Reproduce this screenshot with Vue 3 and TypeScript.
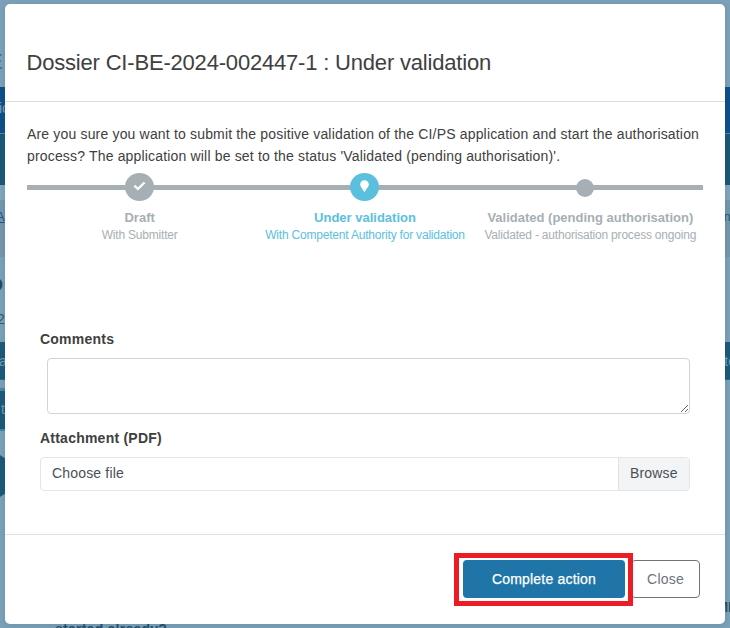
<script setup lang="ts">
import { ref } from 'vue'

interface Step {
  title: string
  detail: string
  state: 'done' | 'current' | 'pending'
}

const steps: Step[] = [
  { title: 'Draft', detail: 'With Submitter', state: 'done' },
  { title: 'Under validation', detail: 'With Competent Authority for validation', state: 'current' },
  { title: 'Validated (pending authorisation)', detail: 'Validated - authorisation process ongoing', state: 'pending' },
]
const comments = ref('')
</script>

<template>
  <div class="screen">
    <div class="page" aria-hidden="true">
      <div class="band top"><span class="brand">E</span></div>
      <div class="band nav"><span class="nav-text">ic</span></div>
      <div class="band sub"></div>
      <div class="band gap"></div>
      <div class="band crumb"><span class="link">A</span><span class="crumb-end">ne</span></div>
      <div class="band heading"><span class="big">D</span><span class="year">2</span></div>
      <div class="band bar"><span>a</span><span class="bar-end">te</span></div>
      <div class="tab"><span>t</span></div>
      <div class="hexagon"></div>
      <div class="band foot"><b class="question">started already?</b><b class="foot-end">MI</b></div>
    </div>

    <section class="modal" role="dialog">
      <header class="modal-header">
        <h1>Dossier CI-BE-2024-002447-1 : Under validation</h1>
      </header>
      <div class="modal-body">
        <p class="message">
          Are you sure you want to submit the positive validation of the CI/PS application and start the authorisation<br />
          process? The application will be set to the status 'Validated (pending authorisation)'.
        </p>
        <ol class="steps">
          <li v-for="s in steps" :key="s.title" class="step" :class="s.state">
            <div class="marker-row">
              <span class="marker">
                <svg v-if="s.state === 'done'" width="13" height="10" viewBox="0 0 13 10">
                  <path d="M1.4 4.7 L4.9 8 L11.6 1.5" fill="none" stroke="#fff" stroke-width="2.3" />
                </svg>
                <svg v-else-if="s.state === 'current'" width="9" height="13" viewBox="0 0 9 13">
                  <path d="M4.5 0.3 C2 .3 .2 2.1 .2 4.4 C.2 6.8 3 8.8 4.5 12.6 C6 8.8 8.8 6.8 8.8 4.4 C8.8 2.1 7 .3 4.5 .3Z" fill="#fff" />
                </svg>
              </span>
            </div>
            <strong>{{ s.title }}</strong>
            <small>{{ s.detail }}</small>
          </li>
        </ol>
        <form class="fields" @submit.prevent>
          <label for="comments">Comments</label>
          <textarea id="comments" v-model="comments"></textarea>
          <label for="file">Attachment (PDF)</label>
          <div id="file" class="file">
            <span class="file-name">Choose file</span>
            <span class="browse">Browse</span>
          </div>
        </form>
      </div>
      <footer class="modal-footer">
        <div class="highlight"><button class="primary" type="button">Complete action</button></div>
        <button class="close" type="button">Close</button>
      </footer>
    </section>
  </div>
</template>

<style>
body { margin: 0; overflow: hidden; }
</style>

<style scoped>
* { box-sizing: border-box; }
.screen {
  position: relative;
  width: 730px;
  height: 628px;
  overflow: hidden;
  font-family: "Liberation Sans", Arial, sans-serif;
  font-size: 14px;
  color: #404040;
}
.page {
  display: flex;
  flex-direction: column;
  height: 628px;
  background: #7ba1b9;
}
.band { display: flex; justify-content: space-between; flex: none; overflow: hidden; white-space: nowrap; }
.top { height: 87px; background: #7ca1b9; }
.brand { margin: 50px 0 0 -12px; font-size: 22px; line-height: 24px; color: #2479aa; }
.nav { height: 47px; background: #0d4f8b; border-bottom: 1px solid #568aa6; color: #7da3bd; }
.nav-text { margin: 13px 0 0 -1px; line-height: 17px; }
.sub { height: 51px; background: #1b5875; }
.gap { height: 15px; background: #80a6be; }
.crumb { height: 57px; background: #7397ae; font-size: 13px; }
.link { margin: 9px 0 0 -4px; line-height: 16px; color: #1d538b; text-decoration: underline; }
.crumb-end { margin: 9px -8px 0 0; line-height: 16px; color: #285579; }
.heading { height: 85px; flex-direction: column; justify-content: flex-start; }
.big { margin: 17px 0 0 -10px; height: 24px; font-size: 18px; line-height: 22px; font-weight: bold; color: #24485f; }
.year { margin: 13px 0 0 -3px; line-height: 17px; color: #31586e; }
.bar { height: 38px; background: #1c5a79; color: #729bb3; line-height: 38px; border-bottom: 1px solid #246a90; }
.bar span { margin-left: -1px; }
.bar .bar-end { margin-right: -6px; }
.tab { width: 8px; height: 43px; margin-top: 8px; border: solid #4d83a4; border-width: 3px 0 2px; background: #1c5a79; color: #729bb3; line-height: 37px; padding-left: 1px; }
.hexagon { flex: none; width: 32px; height: 42px; margin: 24px 0 0 -16px; background: #1c5a79; clip-path: polygon(50% 0, 100% 25%, 100% 75%, 50% 100%, 0 75%, 0 25%); }
.foot { height: 131px; color: #264f6b; }
.question { margin: 124px 0 0 55px; line-height: 16px; letter-spacing: .25px; }
.foot-end { margin: 102px -2px 0 0; line-height: 16px; }

.modal {
  position: absolute;
  left: 5px;
  top: 4px;
  display: flex;
  flex-direction: column;
  width: 720px;
  height: 620px;
  border-radius: 5px;
  background: #fff;
  box-shadow: 0 1px 6px rgba(35, 75, 100, .18);
}
.modal-header { flex: none; height: 98px; padding: 45px 21.5px 0; border-bottom: 1px solid #dedede; }
h1 { margin: 0; font-size: 22px; line-height: 28px; font-weight: 400; white-space: nowrap; letter-spacing: -.19px; }
.modal-body { flex: 1; padding: 21px 22px 0; }
.message { margin: 0; line-height: 22px; letter-spacing: .17px; white-space: nowrap; }
.steps {
  display: grid;
  grid-template-columns: repeat(3, 1fr);
  height: 80px;
  margin: 3px 0 0;
  padding: 0;
  list-style: none;
  background: linear-gradient(#a6afb4, #a6afb4) 0 15px / 100% 5px no-repeat;
}
.step { display: flex; flex-direction: column; align-items: center; color: #a6afb4; white-space: nowrap; }
.current { color: #5bc0de; }
.marker-row { display: flex; align-items: center; height: 34px; margin-bottom: 5px; }
.marker { display: flex; align-items: center; justify-content: center; width: 29px; height: 28px; border-radius: 50%; background: #a6afb4; }
.marker svg { margin-bottom: 2px; }
.current .marker { background: #5bc0de; }
.pending .marker { width: 18px; height: 18px; margin: 2px 10px 0 0; }
.step strong { font-size: 13px; line-height: 18px; }
.step small { font-size: 12px; line-height: 17px; letter-spacing: -.2px; }
.fields { display: flex; flex-direction: column; margin: 79px 13px 0; }
label { height: 20px; line-height: 20px; font-weight: bold; letter-spacing: .23px; }
textarea { height: 56px; margin: 9px 0 14px 7px; border: 1px solid #ced4da; border-radius: 4px; background: #fff; outline: none; resize: both; font: inherit; }
.file { display: flex; height: 34px; margin-top: 9px; border: 1px solid #e3e5e8; border-radius: 4px; color: #495057; line-height: 31px; letter-spacing: .17px; overflow: hidden; }
.file-name { flex: 1; padding-left: 11px; }
.browse { width: 71px; padding-left: 11px; border-left: 1px solid #dfe2e5; background: #f3f4f6; }
.modal-footer { display: flex; flex: none; height: 90px; padding: 18px 25px 0; justify-content: flex-end; align-items: flex-start; border-top: 1px solid #dee2e6; }
.highlight { display: flex; z-index: 1; width: 179px; height: 53px; padding: 2px 3px 3px 4px; border: 5px solid #ed1c24; background: #fff; }
button { font: 14px "Liberation Sans", Arial, sans-serif; letter-spacing: .2px; border-radius: 4px; }
.primary { width: 162px; height: 38px; padding: 0; border: 0; background: #2075a8; color: #fff; -webkit-text-stroke: .25px #fff; }
.close { width: 69px; height: 38px; margin: 7px 0 0 -2px; padding: 0; border: 1px solid #6c757d; background: #fff; color: #6c757d; }
</style>
